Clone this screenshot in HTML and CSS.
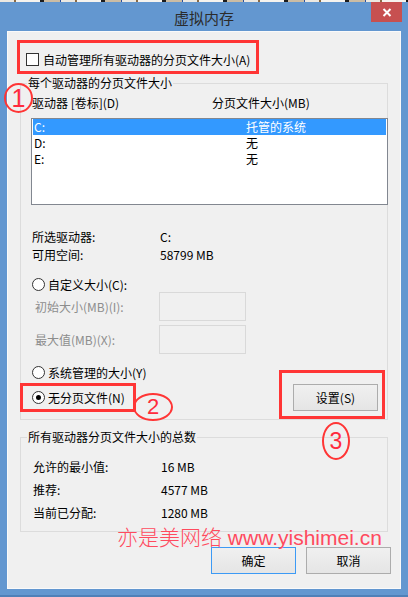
FILE: index.html
```html
<!DOCTYPE html>
<html lang="zh-CN">
<head>
    <meta charset="UTF-8">
    <meta name="viewport" content="width=device-width, initial-scale=1.0">
    <title>虚拟内存</title>
    <link rel="stylesheet" href="styles.css">
</head>
<body>
    <div class="window">
        <div class="desk-strip"></div>
        <div class="titlebar">
            <span></span>
            <div class="title">虚拟内存</div>
            <div class="close">
                <svg width="10" height="9" viewBox="0 0 10 9"><path d="M1.5 1 L8.5 8 M8.5 1 L1.5 8" stroke="#fff" stroke-width="2"/></svg>
            </div>
        </div>

        <div class="content">
            <div class="check-row"><span class="checkbox"></span>自动管理所有驱动器的分页文件大小(A)</div>

            <fieldset class="group group-drives">
                <legend>每个驱动器的分页文件大小</legend>
                <div class="list-head"><span class="col-drive">驱动器 [卷标](D)</span><span>分页文件大小(MB)</span></div>
                <div class="drive-list">
                    <div class="drive-row selected"><span class="col-letter">C:</span><span>托管的系统</span></div>
                    <div class="drive-row"><span class="col-letter">D:</span><span>无</span></div>
                    <div class="drive-row"><span class="col-letter">E:</span><span>无</span></div>
                </div>

                <div class="info-row first"><span class="info-label">所选驱动器:</span><span>C:</span></div>
                <div class="info-row"><span class="info-label">可用空间:</span><span>58799 MB</span></div>

                <div class="radio-row custom"><span class="radio"></span>自定义大小(C):</div>
                <div class="size-row"><span class="size-label">初始大小(MB)(I):</span><span class="size-input"></span></div>
                <div class="size-row second"><span class="size-label">最大值(MB)(X):</span><span class="size-input"></span></div>
                <div class="radio-row system"><span class="radio"></span>系统管理的大小(Y)</div>

                <div class="bottom-row">
                    <div class="radio-row"><span class="radio checked"></span>无分页文件(N)</div>
                    <button class="btn">设置(S)</button>
                </div>
            </fieldset>

            <fieldset class="group group-total">
                <legend>所有驱动器分页文件大小的总数</legend>
                <div class="total-row"><span class="info-label">允许的最小值:</span><span>16 MB</span></div>
                <div class="total-row"><span class="info-label">推荐:</span><span>4577 MB</span></div>
                <div class="total-row"><span class="info-label">当前已分配:</span><span>1280 MB</span></div>
            </fieldset>

            <div class="dialog-buttons">
                <button class="btn btn-default">确定</button>
                <button class="btn">取消</button>
            </div>
        </div>
        <div class="frame-bottom"></div>

        <!-- annotations drawn over the dialog -->
        <div class="mark-box box-1"></div>
        <div class="mark-box box-2"></div>
        <div class="mark-box box-3"></div>
        <div class="mark-num num-1">1</div>
        <div class="mark-num num-2">2</div>
        <div class="mark-num num-3">3</div>
        <div class="watermark">亦是美网络 www.yishimei.cn</div>
    </div>
</body>
</html>
```

FILE: styles.css
```css
* {
    margin: 0;
    padding: 0;
    box-sizing: border-box;
}

body {
    font-family: "Noto Sans CJK SC", "Liberation Sans", sans-serif;
    font-size: 12px;
    color: #000;
    background: #6397d0;
}

.window {
    position: relative;
    width: 408px;
    height: 597px;
    background: #6397d0;
    display: flex;
    flex-direction: column;
    overflow: hidden;
}

.desk-strip {
    height: 2px;
    background: repeating-linear-gradient(90deg, #ece8e1 0 14px, #8a6a44 14px 16px, #f6f3ee 16px 40px, #1c1c1c 40px 44px, #cbbca4 44px 60px, #2a4f9e 60px 61px);
}

.titlebar {
    height: 29px;
    display: grid;
    grid-template-columns: 1fr auto 1fr;
}

.title {
    font-size: 15px;
    color: #2b2b2b;
    line-height: 27px;
    padding-top: 2px;
}

.close {
    justify-self: end;
    margin-right: 6px;
    width: 31px;
    height: 20px;
    background: #c75050;
    display: flex;
    align-items: center;
    justify-content: center;
}

.content {
    margin: 0 7px;
    height: 558px;
    background: #f0f0f0;
    border: 1px solid #fafafa;
    padding: 17px 12px 0;
}

.frame-bottom {
    flex: 1;
    border-bottom: 2px solid #4f80b8;
}

/* checkbox / radio */
.check-row {
    display: flex;
    align-items: center;
    gap: 4px;
    height: 20px;
    margin-left: 6px;
}

.checkbox {
    width: 13px;
    height: 13px;
    border: 1px solid #333;
    background: #fff;
}

.radio-row {
    display: flex;
    align-items: center;
    gap: 3px;
    height: 16px;
    padding-left: 1px;
}

.radio {
    width: 13px;
    height: 13px;
    border: 1px solid #333;
    border-radius: 50%;
    background: #fff;
    display: flex;
    align-items: center;
    justify-content: center;
}

.radio.checked::after {
    content: "";
    width: 5px;
    height: 5px;
    border-radius: 50%;
    background: #000;
}

/* group boxes */
.group {
    border: 1px solid #dcdcdc;
    min-width: 0;
}

.group legend {
    font-size: 12px;
    line-height: 16px;
    padding: 0 1px;
    margin-left: -4px;
}

.group-drives {
    margin-top: 6px;
    padding: 4px 0 8px 10px;
}

.list-head {
    display: flex;
    height: 16px;
    line-height: 16px;
    padding-left: 1px;
    margin-bottom: 7px;
}

.col-drive {
    width: 180px;
}

.drive-list {
    height: 87px;
    border: 1px solid #828790;
    background: #fff;
    padding: 0 1px;
    margin-right: -1px;
}

.drive-row {
    display: flex;
    height: 16px;
    line-height: 16px;
    padding-left: 1px;
}

.drive-row.selected {
    background: #3399ff;
    color: #fff;
}

.col-letter {
    width: 212px;
}

.info-row {
    display: flex;
    height: 18px;
    line-height: 18px;
    padding-left: 1px;
}

.info-row.first {
    margin-top: 23px;
}

.info-label {
    width: 128px;
}

.radio-row.custom {
    margin-top: 12px;
}

.size-row {
    display: flex;
    align-items: center;
    height: 29px;
    padding-left: 4px;
}

.size-row.second {
    margin-top: 4px;
}

.size-label {
    width: 124px;
    color: #8d8d8d;
}

.size-input {
    width: 87px;
    height: 29px;
    border: 1px solid #d9d9d9;
    background: #f0f0f0;
}

.radio-row.system {
    margin-top: 10px;
}

.bottom-row {
    display: flex;
    align-items: center;
    justify-content: space-between;
    height: 27px;
    margin-top: 4px;
    padding-right: 9px;
}

.group-total {
    margin-top: 9px;
    padding: 10px 0 7px 12px;
}

.group-total legend {
    margin-left: -6px;
}

.total-row {
    display: flex;
    height: 23px;
    line-height: 23px;
}

/* buttons */
.btn {
    width: 85px;
    height: 27px;
    border: 1px solid #acacac;
    background: linear-gradient(#f0f0f0, #e5e5e5);
    font: inherit;
    color: #000;
}

.btn-default {
    border-color: #3c9af5;
}

.dialog-buttons {
    display: flex;
    justify-content: flex-end;
    gap: 10px;
    margin-top: 15px;
    margin-right: -3px;
}

/* annotations */
.mark-box {
    position: absolute;
    border: 3px solid #ff3535;
}

.box-1 {
    left: 17px;
    top: 40px;
    width: 242px;
    height: 34px;
}

.box-2 {
    left: 20px;
    top: 383px;
    width: 116px;
    height: 29px;
}

.box-3 {
    left: 279px;
    top: 370px;
    width: 106px;
    height: 49px;
}

.mark-num {
    position: absolute;
    border: 2px solid #ff3535;
    border-radius: 50%;
    color: #ff2b3d;
    font-family: "Liberation Sans", sans-serif;
    font-size: 22px;
    display: flex;
    align-items: center;
    justify-content: center;
}

.num-1 {
    left: 4px;
    top: 83px;
    width: 29px;
    height: 30px;
    font-size: 25px;
}

.num-2 {
    left: 133px;
    top: 393px;
    width: 40px;
    height: 28px;
}

.num-3 {
    left: 322px;
    top: 422px;
    width: 28px;
    height: 38px;
    font-size: 23px;
}

.watermark {
    position: absolute;
    left: 117px;
    top: 526px;
    font-family: "Liberation Sans", "Noto Sans CJK SC", sans-serif;
    font-size: 21px;
    font-weight: 300;
    line-height: 24px;
    color: #ff4a5e;
    white-space: nowrap;
}
```
